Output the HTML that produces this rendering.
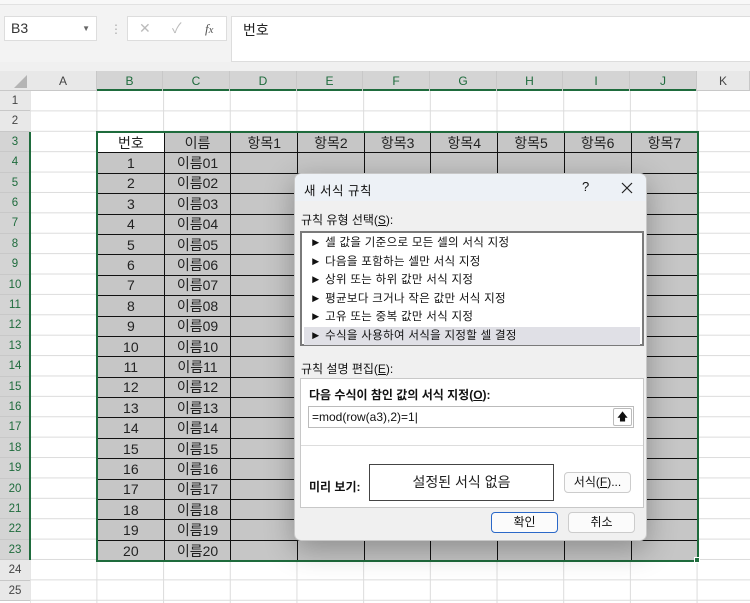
<!DOCTYPE html>
<html><head><meta charset="utf-8"><style>
*{margin:0;padding:0;box-sizing:border-box}
body{width:750px;height:603px;overflow:hidden;background:#fff;position:relative;font-family:"Liberation Sans","Noto Sans CJK KR",sans-serif;font-size:14px;color:#222}
.a{position:absolute}
.ch{position:absolute;top:71px;height:20px;text-align:center;line-height:20px;font-size:12px;color:#444;border-right:1px solid #c8c8c8}
.rh{position:absolute;left:0;width:30px;height:20.4px;text-align:center;line-height:20px;font-size:11.5px;color:#444;background:#e8e8e8;border-bottom:1px solid #c8c8c8}
.rh.s{background:#d4d4d4;color:#1e6b3c}
table{position:absolute;left:97px;top:132px;border-collapse:collapse;table-layout:fixed}
td{width:66.7px;height:20.4px;border:1px solid #111;background:#c6c6c6;text-align:center;font-size:14px;line-height:18px;padding:0;color:#222}
.dl{font-size:12px;color:#111}
.li{position:absolute;left:2px;right:2px;height:18.5px;line-height:18.5px;font-size:11.5px;padding-left:6px;color:#111;letter-spacing:0.3px}
.btn{position:absolute;height:21px;background:#fbfbfb;border:1px solid #ccc;border-radius:4px;text-align:center;line-height:19px;font-size:12px;color:#111}
</style></head><body>
<div class="a" style="left:0;top:0;width:750px;height:62px;background:#f3f3f3"></div>
<div class="a" style="left:0;top:0;width:750px;height:5px;background:#f8f8f8;border-bottom:1px solid #e2e2e2"></div>
<div class="a" style="left:4px;top:16px;width:93px;height:25px;background:#fff;border:1px solid #ddd;font-size:14px;line-height:23px;padding-left:6px;color:#333">B3<span style="position:absolute;right:6px;top:0;font-size:8px;color:#666">▼</span></div>
<div class="a" style="left:110px;top:22px;color:#aaa;font-size:12px">⋮</div>
<div class="a" style="left:127px;top:16px;width:100px;height:25px;background:#fff;border:1px solid #ddd;font-size:14px;line-height:23px;color:#bbb"><span style="position:absolute;left:11px">✕</span><span style="position:absolute;left:44px">✓</span><span style="position:absolute;left:77px;color:#555;font-style:italic;font-family:'Liberation Serif',serif;font-size:13px">f<small>x</small></span></div>
<div class="a" style="left:231px;top:16px;width:525px;height:46px;background:#fff;border:1px solid #ddd;font-size:14px;padding:3px 11px;color:#222">번호</div>
<div class="a" style="left:0;top:62px;width:750px;height:9px;background:#f0f0f0"></div>
<div class="a" style="left:0;top:71px;width:750px;height:20px;background:#e8e8e8;border-bottom:1px solid #c8c8c8"></div>
<div class="a" style="left:97px;top:71px;width:600px;height:20px;background:#d4d4d4;border-bottom:2px solid #1e6b3c"></div>
<div class="a" style="left:14px;top:75px;width:0;height:0;border-left:13px solid transparent;border-bottom:13px solid #b4b4b4"></div>
<div class="ch" style="left:30px;width:67px">A</div>
<div class="ch" style="left:97px;width:66px;color:#1e6b3c">B</div>
<div class="ch" style="left:163px;width:67px;color:#1e6b3c">C</div>
<div class="ch" style="left:230px;width:67px;color:#1e6b3c">D</div>
<div class="ch" style="left:297px;width:66px;color:#1e6b3c">E</div>
<div class="ch" style="left:363px;width:67px;color:#1e6b3c">F</div>
<div class="ch" style="left:430px;width:67px;color:#1e6b3c">G</div>
<div class="ch" style="left:497px;width:66px;color:#1e6b3c">H</div>
<div class="ch" style="left:563px;width:67px;color:#1e6b3c">I</div>
<div class="ch" style="left:630px;width:67px;color:#1e6b3c">J</div>
<div class="ch" style="left:697px;width:53px">K</div>
<div class="a" style="left:30px;top:91px;width:720px;height:512px;background-image:linear-gradient(to right,#dcdcdc 1px,transparent 1px),linear-gradient(to bottom,#dcdcdc 1px,transparent 1px);background-size:66.7px 20.4px;background-position:-0.3px -1px"></div>
<div class="rh" style="top:91px">1</div><div class="rh" style="top:111.4px">2</div>
<div class="rh s" style="top:131.8px">3</div><div class="rh s" style="top:152.2px">4</div><div class="rh s" style="top:172.6px">5</div><div class="rh s" style="top:193px">6</div><div class="rh s" style="top:213.4px">7</div><div class="rh s" style="top:233.8px">8</div><div class="rh s" style="top:254.2px">9</div><div class="rh s" style="top:274.6px">10</div><div class="rh s" style="top:295px">11</div><div class="rh s" style="top:315.4px">12</div><div class="rh s" style="top:335.8px">13</div><div class="rh s" style="top:356.2px">14</div><div class="rh s" style="top:376.6px">15</div><div class="rh s" style="top:397px">16</div><div class="rh s" style="top:417.4px">17</div><div class="rh s" style="top:437.8px">18</div><div class="rh s" style="top:458.2px">19</div><div class="rh s" style="top:478.6px">20</div><div class="rh s" style="top:499px">21</div><div class="rh s" style="top:519.4px">22</div><div class="rh s" style="top:539.8px">23</div>
<div class="rh" style="top:560.2px">24</div><div class="rh" style="top:580.6px">25</div>
<div class="a" style="left:29px;top:132px;width:2px;height:428px;background:#1e6b3c"></div>
<table>
<tr><td style="background:#fff">번호</td><td>이름</td><td>항목1</td><td>항목2</td><td>항목3</td><td>항목4</td><td>항목5</td><td>항목6</td><td>항목7</td></tr>
<tr><td>1</td><td>이름01</td><td></td><td></td><td></td><td></td><td></td><td></td><td></td></tr>
<tr><td>2</td><td>이름02</td><td></td><td></td><td></td><td></td><td></td><td></td><td></td></tr>
<tr><td>3</td><td>이름03</td><td></td><td></td><td></td><td></td><td></td><td></td><td></td></tr>
<tr><td>4</td><td>이름04</td><td></td><td></td><td></td><td></td><td></td><td></td><td></td></tr>
<tr><td>5</td><td>이름05</td><td></td><td></td><td></td><td></td><td></td><td></td><td></td></tr>
<tr><td>6</td><td>이름06</td><td></td><td></td><td></td><td></td><td></td><td></td><td></td></tr>
<tr><td>7</td><td>이름07</td><td></td><td></td><td></td><td></td><td></td><td></td><td></td></tr>
<tr><td>8</td><td>이름08</td><td></td><td></td><td></td><td></td><td></td><td></td><td></td></tr>
<tr><td>9</td><td>이름09</td><td></td><td></td><td></td><td></td><td></td><td></td><td></td></tr>
<tr><td>10</td><td>이름10</td><td></td><td></td><td></td><td></td><td></td><td></td><td></td></tr>
<tr><td>11</td><td>이름11</td><td></td><td></td><td></td><td></td><td></td><td></td><td></td></tr>
<tr><td>12</td><td>이름12</td><td></td><td></td><td></td><td></td><td></td><td></td><td></td></tr>
<tr><td>13</td><td>이름13</td><td></td><td></td><td></td><td></td><td></td><td></td><td></td></tr>
<tr><td>14</td><td>이름14</td><td></td><td></td><td></td><td></td><td></td><td></td><td></td></tr>
<tr><td>15</td><td>이름15</td><td></td><td></td><td></td><td></td><td></td><td></td><td></td></tr>
<tr><td>16</td><td>이름16</td><td></td><td></td><td></td><td></td><td></td><td></td><td></td></tr>
<tr><td>17</td><td>이름17</td><td></td><td></td><td></td><td></td><td></td><td></td><td></td></tr>
<tr><td>18</td><td>이름18</td><td></td><td></td><td></td><td></td><td></td><td></td><td></td></tr>
<tr><td>19</td><td>이름19</td><td></td><td></td><td></td><td></td><td></td><td></td><td></td></tr>
<tr><td>20</td><td>이름20</td><td></td><td></td><td></td><td></td><td></td><td></td><td></td></tr>
</table>
<div class="a" style="left:96px;top:131px;width:603px;height:431px;border:2px solid #1e6b3c"></div>
<div class="a" style="left:694px;top:557px;width:6px;height:6px;background:#1e6b3c;border:1px solid #fff"></div>
<div class="a" style="left:294px;top:173px;width:353px;height:368px;background:#f0f0f0;border:1px solid #c8c8c8;border-radius:7px;box-shadow:0 8px 30px rgba(0,0,0,0.3);overflow:hidden">
 <div class="a" style="left:0;top:0;width:353px;height:27px;background:#edf1f6"></div>
 <div class="a dl" style="left:9px;top:6px;font-size:12.5px;letter-spacing:0.5px">새 서식 규칙</div>
 <div class="a dl" style="left:287px;top:5px;font-size:13px">?</div>
 <svg class="a" style="left:326px;top:8px" width="12" height="12" viewBox="0 0 12 12"><path d="M1 1L11 11M11 1L1 11" stroke="#222" stroke-width="1.2"/></svg>
 <div class="a dl" style="left:6px;top:37px">규칙 유형 선택(<u>S</u>):</div>
 <div class="a" style="left:5px;top:57px;width:344px;height:115px;background:#fff;border:2px solid #7a7a7a">
  <div class="li" style="top:1px">► 셀 값을 기준으로 모든 셀의 서식 지정</div>
  <div class="li" style="top:19.5px">► 다음을 포함하는 셀만 서식 지정</div>
  <div class="li" style="top:38px">► 상위 또는 하위 값만 서식 지정</div>
  <div class="li" style="top:56.5px">► 평균보다 크거나 작은 값만 서식 지정</div>
  <div class="li" style="top:75px">► 고유 또는 중복 값만 서식 지정</div>
  <div class="li" style="top:93.5px;background:#e0e0e6">► 수식을 사용하여 서식을 지정할 셀 결정</div>
 </div>
 <div class="a dl" style="left:6px;top:186px">규칙 설명 편집(<u>E</u>):</div>
 <div class="a" style="left:5px;top:204px;width:344px;height:130px;background:#fff;border:1px solid #c8c8c8">
  <div class="a dl" style="left:8px;top:7px;font-weight:bold">다음 수식이 참인 값의 서식 지정(<u>O</u>):</div>
  <div class="a" style="left:7px;top:27px;width:326px;height:22px;border:1px solid #bbb;font-size:12px;line-height:20px;padding-left:3px;color:#111">=mod(row(a3),2)=1|
   <div class="a" style="right:1px;top:1px;width:19px;height:18px;border:1px solid #bbb;border-radius:2px;font-size:11px;line-height:16px;text-align:center">🡅</div></div>
  <div class="a" style="left:0;top:66px;width:342px;height:1px;background:#ddd"></div>
  <div class="a dl" style="left:8px;top:99px;font-weight:bold">미리 보기:</div>
  <div class="a" style="left:68px;top:85px;width:185px;height:37px;border:1px solid #444;text-align:center;line-height:35px;font-size:14px;color:#222">설정된 서식 없음</div>
  <div class="btn" style="left:263px;top:93px;width:67px">서식(<u>F</u>)...</div>
 </div>
 <div class="btn" style="left:196px;top:338px;width:67px;border:1px solid #2a68c8">확인</div>
 <div class="btn" style="left:273px;top:338px;width:67px">취소</div>
</div>
</body></html>
